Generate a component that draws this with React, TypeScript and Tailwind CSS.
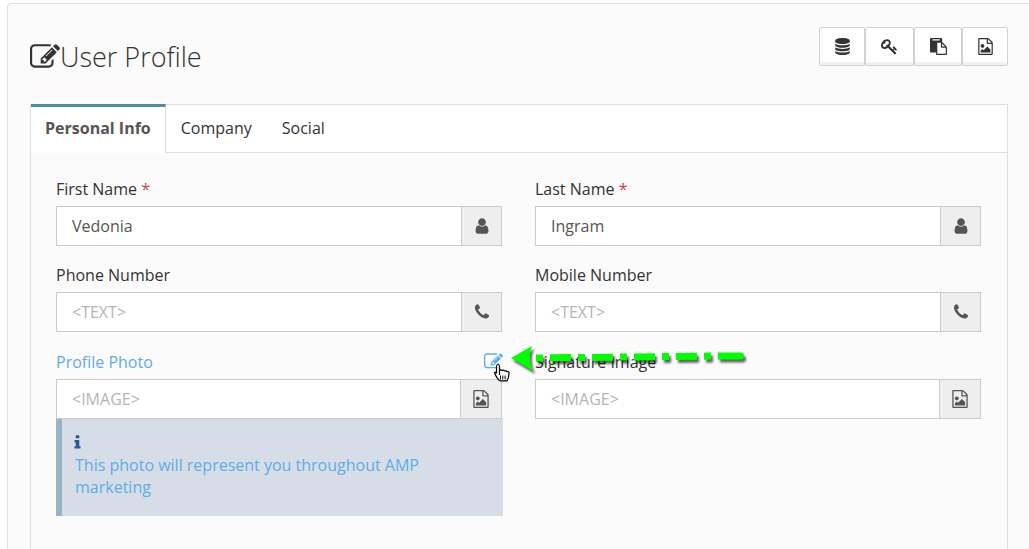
import { useState } from "react"

const icons = {
  edit: "M888 1184l116-116-152-152-116 116v56h96v96h56zm440-720q-16-16-33 1l-350 350q-17 17-1 33t33-1l350-350q17-17 1-33zm80 594v190q0 119-84.5 203.5t-203.5 84.5h-832q-119 0-203.5-84.5t-84.5-203.5v-832q0-119 84.5-203.5t203.5-84.5h832q63 0 117 25 15 7 18 23 3 17-9 29l-49 49q-14 14-32 8-23-6-45-6h-832q-66 0-113 47t-47 113v832q0 66 47 113t113 47h832q66 0 113-47t47-113v-126q0-13 9-22l64-64q15-15 35-7t20 29zm-96-738l288 288-672 672h-288v-288zm444 132l-92 92-288-288 92-92q28-28 68-28t68 28l152 152q28 28 28 68t-28 68z",
  user: "M1536 1399q0 109-62.5 187t-150.5 78h-854q-88 0-150.5-78t-62.5-187q0-85 8.5-160.5t31.5-152 58.5-131 94-89 134.5-34.5q131 128 313 128t313-128q76 0 134.5 34.5t94 89 58.5 131 31.5 152 8.5 160.5zm-256-887q0 159-112.5 271.5t-271.5 112.5-271.5-112.5-112.5-271.5 112.5-271.5 271.5-112.5 271.5 112.5 112.5 271.5z",
  phone: "M1600 1240q0 27-10 70.5t-21 68.5q-21 50-122 106-94 51-186 51-27 0-53-3.5t-57.5-12.5-47-14.5-55.5-20.5-49-18q-98-35-175-83-127-79-264-216t-216-264q-48-77-83-175-3-9-18-49t-20.5-55.5-14.5-47-12.5-57.5-3.5-53q0-92 51-186 56-101 106-122 25-11 68.5-21t70.5-10q14 0 21 3 18 6 53 76 11 19 30 54t35 63.5 31 53.5q3 4 17.5 25t21.5 35.5 7 28.5q0 20-28.5 50t-62 55-62 53-28.5 46q0 9 5 22.5t8.5 20.5 14 24 11.5 19q76 137 174 235t235 174q2 1 19 11.5t24 14 20.5 8.5 22.5 5q18 0 46-28.5t53-62 55-62 50-28.5q14 0 28.5 7t35.5 21.5 25 17.5q25 15 53.5 31t63.5 35 54 30q70 35 76 53 3 7 3 21z",
  database: "M896 768q237 0 443-43t325-127v170q0 69-103 128t-280 93.5-385 34.5-385-34.5-280-93.5-103-128v-170q119 84 325 127t443 43zm0 768q237 0 443-43t325-127v170q0 69-103 128t-280 93.5-385 34.5-385-34.5-280-93.5-103-128v-170q119 84 325 127t443 43zm0-384q237 0 443-43t325-127v170q0 69-103 128t-280 93.5-385 34.5-385-34.5-280-93.5-103-128v-170q119 84 325 127t443 43zm0-1152q208 0 385 34.5t280 93.5 103 128v128q0 69-103 128t-280 93.5-385 34.5-385-34.5-280-93.5-103-128v-128q0-69 103-128t280-93.5 385-34.5z",
  key: "M832 512q0-80-56-136t-136-56-136 56-56 136q0 42 19 83-41-19-83-19-80 0-136 56t-56 136 56 136 136 56 136-56 56-136q0-42-19-83 41 19 83 19 80 0 136-56t56-136zm851 704q0 17-49 66t-66 49q-9 0-28.5-16t-36.5-33-38.5-40-24.5-26l-96 96 220 220q28 28 28 68 0 42-39 81t-81 39q-40 0-68-28l-671-671q-176 131-365 131-163 0-265.5-102.5t-102.5-265.5q0-160 95-313t248-248 313-95q163 0 265.5 102.5t102.5 265.5q0 189-131 365l355 355 96-96q-3-3-26-24.5t-40-38.5-33-36.5-16-28.5q0-17 49-66t66-49q13 0 23 10 6 6 46 44.5t82 79.5 86.5 86 73 78 28.5 41z",
  paste: "M768 1664h896v-640h-416q-40 0-68-28t-28-68v-416h-384v1152zm256-1440v-64q0-13-9.5-22.5t-22.5-9.5h-704q-13 0-22.5 9.5t-9.5 22.5v64q0 13 9.5 22.5t22.5 9.5h704q13 0 22.5-9.5t9.5-22.5zm256 672h299l-299-299v299zm512 128v672q0 40-28 68t-68 28h-960q-40 0-68-28t-28-68v-160h-544q-40 0-68-28t-28-68v-1344q0-40 28-68t68-28h1088q40 0 68 28t28 68v328q21 13 36 28l408 408q28 28 48 76t20 88z",
  image: "M1596 380q28 28 48 76t20 88v1152q0 40-28 68t-68 28h-1344q-40 0-68-28t-28-68v-1600q0-40 28-68t68-28h896q40 0 88 20t76 48zm-444-244v376h376q-10-29-22-41l-313-313q-12-12-41-22zm384 1528v-1024h-416q-40 0-68-28t-28-68v-416h-768v1536h1280zm-128-448v320h-1024v-192l192-192 128 128 384-384zm-832-192q-80 0-136-56t-56-136 56-136 136-56 136 56 56 136-56 136-136 56z",
  info: "M1216 1344v128q0 26-19 45t-45 19h-512q-26 0-45-19t-19-45v-128q0-26 19-45t45-19h64v-384h-64q-26 0-45-19t-19-45v-128q0-26 19-45t45-19h384q26 0 45 19t19 45v576h64q26 0 45 19t19 45zm-128-1152v192q0 26-19 45t-45 19h-256q-26 0-45-19t-19-45v-192q0-26 19-45t45-19h256q26 0 45 19t19 45z",
}

type IconName = keyof typeof icons

function Icon({ name, className }: { name: IconName; className: string }) {
  return (
    <svg viewBox="0 0 1792 1792" fill="currentColor" aria-hidden="true" className={className}>
      <path d={icons[name]} />
    </svg>
  )
}

function Toolbar() {
  const actions: { icon: IconName; label: string; width: string }[] = [
    { icon: "database", label: "Data", width: "w-[46px]" },
    { icon: "key", label: "Password", width: "w-[49px]" },
    { icon: "paste", label: "Paste", width: "w-12" },
    { icon: "image", label: "Image", width: "w-[46px]" },
  ]

  return (
    <div className="flex">
      {actions.map((action) => (
        <button
          key={action.label}
          type="button"
          aria-label={action.label}
          className={`${action.width} flex h-[39px] items-center justify-center rounded-xs border border-[#d2d2d2] bg-white shadow-[inset_0_-3px_0_#f2f2f2]`}
        >
          <Icon name={action.icon} className="size-[17px]" />
        </button>
      ))}
    </div>
  )
}

function Tabs() {
  const tabs = ["Personal Info", "Company", "Social"]
  const [active, setActive] = useState(tabs[0])

  return (
    <div role="tablist" className="flex h-[49px] bg-white shadow-[inset_0_1px_0_#dedede,inset_0_-1px_0_#dedede]">
      {tabs.map((tab) => (
        <button
          key={tab}
          type="button"
          role="tab"
          aria-selected={tab === active}
          onClick={() => setActive(tab)}
          className={
            tab === active
              ? "border-t-3 border-r border-t-[#4f8ba4] border-r-[#dedede] bg-white px-3.5 pb-1 font-bold text-[#555]"
              : "px-[15px] pb-px"
          }
        >
          {tab}
        </button>
      ))}
    </div>
  )
}

type FieldProps = {
  id: string
  label: string
  icon: IconName
  value?: string
  placeholder?: string
  required?: boolean
  highlighted?: boolean
  help?: string
}

function Field({ id, label, icon, value, placeholder, required, highlighted, help }: FieldProps) {
  const isImage = icon === "image"

  return (
    <div>
      <div className={`flex items-center justify-between ${isImage ? "h-[27px]" : "h-[26px]"}`}>
        <label htmlFor={id} className={highlighted ? "text-[#5dade9]" : ""}>
          {label}
          {required && <span className="text-[#b94a48]"> *</span>}
        </label>
        {highlighted && (
          <button type="button" aria-label={`Edit ${label}`} className="-mr-px text-[#5dade9]">
            <Icon name="edit" className="size-[19px]" />
          </button>
        )}
      </div>
      <div className="mt-1 flex h-10 border border-[#ccc] bg-white">
        <input
          id={id}
          type="text"
          defaultValue={value}
          placeholder={placeholder}
          className="min-w-0 flex-1 px-[15px] text-[#555] outline-none placeholder:text-[#b5b5b5]"
        />
        <span
          className={`flex items-center justify-center border-l border-[#ccc] bg-[#eee] text-[#555] ${isImage ? "w-[41px]" : "w-10"}`}
        >
          <Icon name={icon} className="size-[18px]" />
        </span>
      </div>
      {help && (
        <div className="-mr-px h-[97px] border-l-6 border-[#9ab3c4] bg-[#d6dde7] px-[13px] pt-3.5 leading-[22px] text-[#5dade9]">
          <Icon name="info" className="-ml-1.5 mt-px mb-[3px] size-[17px] text-[#2a5a94]" />
          {help}
        </div>
      )}
    </div>
  )
}

function Pointer() {
  return (
    <svg viewBox="0 0 276 50" aria-hidden="true" className="pointer-events-none absolute top-[338px] left-[480px] h-[50px] w-[276px]">
      <g className="drop-shadow-[2px_3px_1px_#0009]" fill="#0f0" stroke="#0f0">
        <path d="M31 20L52 8q-5 12 1 25z" stroke="none" />
        <path d="M56 20L236 18" strokeWidth="7" strokeDasharray="7 7 21 7" fill="none" />
        <path d="M238 14.5H260.500a3.500 3.500 0 0 1 0 7H238z" stroke="none" />
      </g>
      <path
        d="M18.500 38V29.500q0-2-1.500-2t-1.500 2V36l-.5-.5q-1-.7-1.500.3 1 3 3 5.500 1.500 2 2.500 2.500h7q1.500-2 2-7v-1.500q-.5-1.300-2-.5-.5-1.500-2.500-.8-1-1.500-2.500-.5-.8-.8-2.500-.5"
        transform="translate(1 -1)"
        fill="#fff"
        stroke="#000"
        strokeWidth="1.2"
        strokeLinejoin="round"
      />
      <path d="M20.500 37.500v4M22.800 37.500v4M25.100 37.500v4" stroke="#000" strokeWidth="1" />
    </svg>
  )
}

export default function App() {
  return (
    <div className="relative flex min-h-screen flex-col bg-white pt-[3px] pl-[7px] font-['Open_Sans',sans-serif] text-[16px] text-[#333]">
      <main className="flex flex-1 flex-col rounded-tl-sm border-t border-l border-[#dedede] bg-[#fbfbfb] pt-[23px] pr-[21px] pl-[22px]">
        <header className="flex items-start justify-between">
          <h1 className="flex h-[60px] items-center text-[27px] font-light">
            <Icon name="edit" className="size-[30px]" />
            User Profile
          </h1>
          <Toolbar />
        </header>
        <section className="mt-[17px] flex-1 border-x border-[#dedede]">
          <Tabs />
          <form className="grid grid-cols-2 gap-x-[33px] gap-y-4 pt-[23px] pr-[26px] pl-[25px]">
            <Field id="first-name" label="First Name" icon="user" value="Vedonia" required />
            <Field id="last-name" label="Last Name" icon="user" value="Ingram" required />
            <Field id="phone" label="Phone Number" icon="phone" placeholder="<TEXT>" />
            <Field id="mobile" label="Mobile Number" icon="phone" placeholder="<TEXT>" />
            <Field
              id="photo"
              label="Profile Photo"
              icon="image"
              placeholder="<IMAGE>"
              highlighted
              help="This photo will represent you throughout AMP marketing"
            />
            <Field id="signature" label="Signature Image" icon="image" placeholder="<IMAGE>" />
          </form>
        </section>
      </main>
      <Pointer />
    </div>
  )
}
